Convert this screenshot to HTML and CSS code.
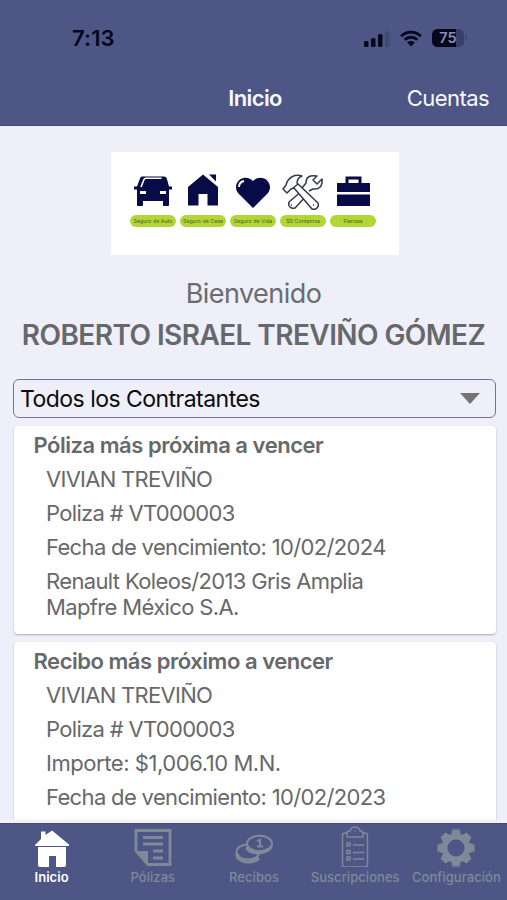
FILE: index.html
```html
<!DOCTYPE html>
<html lang="es">
<head>
<meta charset="utf-8">
<meta name="viewport" content="width=device-width, initial-scale=1">
<title>Inicio</title>
<link rel="stylesheet" href="styles.css">
</head>
<body>
<div class="app">
  <header class="header">
    <div class="status">
      <span class="time">7:13</span>
      <div class="status-icons">
        <svg class="signal" width="26" height="17" viewBox="0 0 26 17">
          <rect x="0" y="11" width="4.5" height="6" rx="1.5"/><rect x="7" y="8" width="4.5" height="9" rx="1.5"/><rect x="14" y="4" width="4.5" height="13" rx="1.5"/><rect class="dim" x="21" y="1" width="4.5" height="16" rx="1.5"/>
        </svg>
        <svg class="wifi" width="22" height="17" viewBox="0 0 22 17">
          <path d="M1.2 6.2a14 14 0 0 1 19.6 0M4.7 9.8a9 9 0 0 1 12.6 0" fill="none" stroke="#05071c" stroke-width="2.8"/><path d="M7.2 12.6a5.6 5.6 0 0 1 7.6 0L11 16.5z"/>
        </svg>
        <div class="battery"><span>75</span></div>
      </div>
    </div>
    <nav class="navbar">
      <h1>Inicio</h1>
      <a class="accounts">Cuentas</a>
    </nav>
  </header>

  <main class="content">
    <section class="banner">
      <div class="service">
        <svg width="38" height="34" viewBox="0 0 38 34"><path d="M8 2.500h22q2 0 2.800 2L35 12.500V31q0 1-1 1h-4q-1 0-1-1v-4H9v4q0 1-1 1H4q-1 0-1-1V12.500L6 4.500q.5-2 2-2z"/><path d="M0 14h5M33 14h5" stroke="#080b46" stroke-width="3"/><path d="M7 13l3-7.500q.5-1.300 2-1.300h15.500" fill="none" stroke="#fff" stroke-width="1.600"/><path d="M6 17h6v3H6zM26 17h6v3h-6z" fill="#fff"/></svg>
        <span class="pill">Seguro de Auto</span>
      </div>
      <div class="service">
        <svg width="38" height="34" viewBox="0 0 38 34"><path d="M19 .5 34 13v18.500H23.500V20h-9v11.500H4V13z"/><path d="M25 .5h7v7z"/></svg>
        <span class="pill">Seguro de Casa</span>
      </div>
      <div class="service">
        <svg width="38" height="34" viewBox="0 0 38 34"><path d="M19 34 4 19C-3 9 10-2 19 7c9-9 22 2 15 12z"/><path d="M5 13q0-5 5-6" fill="none" stroke="#fff" stroke-width="2"/></svg>
        <span class="pill">Seguro de Vida</span>
      </div>
      <div class="service">
        <svg class="tools" width="42" height="36" viewBox="0 0 42 36"><path d="m21 16-14 12q-1 3 1 5t5 1l12-13M27 17l4-2q10 1 9-10l-5 5-4-4 4-4q-11-2-11 7l-4 5"/><path d="m9 15-4 4-4-4 3-4c2-8 9-11 16-9q-5 2-5 7l21 20q1 3-1 5t-5 1L12 14z"/><path d="m11 14 5-4M31 31h1M9 31h1"/></svg>
        <span class="pill">SD Contamos</span>
      </div>
      <div class="service">
        <svg width="38" height="34" viewBox="0 0 38 34"><path d="M3 9h33v9H3zM3 20.500h33V32H3z"/><path d="M13 9V4h13v5" fill="none" stroke="#080b46" stroke-width="3"/></svg>
        <span class="pill">Fianzas</span>
      </div>
    </section>

    <section class="welcome">
      <p class="greeting">Bienvenido</p>
      <h2>ROBERTO ISRAEL TREVIÑO GÓMEZ</h2>
    </section>

    <div class="select"><span>Todos los Contratantes</span><svg width="20" height="11" viewBox="0 0 20 11"><path d="M0 0h20L10 11z"/></svg></div>

    <article class="card">
      <h3>Póliza más próxima a vencer</h3>
      <p class="vivian">VIVIAN TREVIÑO</p>
      <p class="number">Poliza # VT000003</p>
      <p class="date">Fecha de vencimiento: 10/02/2024</p>
      <p class="car">Renault Koleos/2013 Gris Amplia<br>Mapfre México S.A.</p>
    </article>
    <article class="card">
      <h3>Recibo más próximo a vencer</h3>
      <p class="vivian">VIVIAN TREVIÑO</p>
      <p class="number">Poliza # VT000003</p>
      <p class="amount">Importe: $1,006.10 M.N.</p>
      <p class="date">Fecha de vencimiento: 10/02/2023</p>
    </article>
  </main>

  <nav class="tabs">
    <a class="tab active">
      <svg width="36" height="44" viewBox="0 0 36 44"><path d="M1 22 7 16V8.500h4.500V12L18 7.500 35 21.500V23H1z"/><path d="M4 24h28v18q0 2-2 2h-8V33h-7v11H6q-2 0-2-2z"/></svg>
      <span>Inicio</span>
    </a>
    <a class="tab">
      <svg width="38" height="44" viewBox="0 0 38 44"><path d="M2 7.500h34v34H14L2 28z" fill="none" stroke="#7f8a98" stroke-width="2.800"/><path d="M2 28h12v14z"/><path d="M9 14.500h20M9 21h20M19 28h10M19 35h10" stroke="#7f8a98" stroke-width="3.200"/></svg>
      <span>Pólizas</span>
    </a>
    <a class="tab">
      <svg class="coins" width="38" height="44" viewBox="0 0 38 44"><ellipse cx="13" cy="29" rx="11.500" ry="7.500"/><path class="rim" d="M2 31c1 8 13 10 22 4"/><path class="rim" d="M12 24c3 8 22 7 24-2"/><ellipse cx="24.500" cy="20.500" rx="12.500" ry="7.700"/><path class="one" d="m22 18 3-1v6M22 23.500h6"/></svg>
      <span>Recibos</span>
    </a>
    <a class="tab">
      <svg class="clipboard" width="28" height="44" viewBox="0 0 28 44"><path d="M6 10H4Q1.500 10 1.500 12.500V42q0 2 2.500 2h20q2.500 0 2.500-2V12.500Q26.500 10 24 10h-2M6 14v-3.500Q6 8 9 8q1-4 5-4t5 4q3 0 3 2.500V14zM14 8h.1M6 20h3v3H6zM6 27.500h3v3H6zM6 34h3v3H6zM12.500 22H23M12.500 29.500H23M12.500 36H23"/></svg>
      <span>Suscripciones</span>
    </a>
    <a class="tab">
      <svg class="gear" width="38" height="44" viewBox="0 0 38 44"><circle cx="19" cy="25" r="11.500" fill="none" stroke="#7f8a98" stroke-width="6"/><path d="M14 12l1.500-5.500h7L24 12zM14 38l1.500 5.500h7L24 38zM6 20l-5.500 1.500v7L6 30zM32 20l5.500 1.500v7L32 30z"/><path transform="rotate(45 19 25)" d="M14 12l1.500-5.500h7L24 12zM14 38l1.500 5.500h7L24 38zM6 20l-5.500 1.500v7L6 30zM32 20l5.500 1.500v7L32 30z"/></svg>
      <span>Configuración</span>
    </a>
  </nav>
</div>
</body>
</html>
```

FILE: styles.css
```css
* { box-sizing: border-box; }
body { margin: 0; font-family: Inter, "Liberation Sans", sans-serif; color: #67686b; background: #eeeff8; }
h1, h2, h3, p { margin: 0; }
svg { display: block; flex: none; }
.app { width: 507px; height: 900px; display: flex; flex-direction: column; overflow: hidden; }

.header { flex: none; height: 126px; background: #4d5685; border-bottom: 1px solid #444b75; }
.status { height: 70px; padding: 6px 43px 0 72px; display: flex; align-items: center; justify-content: space-between; }
.time { font-size: 22px; font-weight: 600; letter-spacing: 0.1px; color: #05071c; }
.status-icons { display: flex; align-items: center; gap: 10px; fill: #05071c; }
.dim { fill: #414a75; }
.battery { position: relative; width: 32px; height: 18px; border-radius: 5.5px; background: linear-gradient(90deg, #05071c 76%, #38406a 76%); color: #8890b4; font-size: 14.5px; font-weight: 600; line-height: 18px; text-align: center; }
.battery::after { content: ""; position: absolute; left: 33px; top: 6px; width: 2px; height: 6px; border-radius: 0 2px 2px 0; background: #414a75; }
.navbar { height: 55px; display: grid; grid-template-columns: 1fr auto 1fr; align-items: center; padding: 0 18px 0 21px; color: #f8f8ff; font-size: 22px; line-height: 26px; }
.navbar h1 { grid-column: 2; font-size: 22px; font-weight: 600; letter-spacing: -0.6px; }
.accounts { justify-self: end; letter-spacing: -0.55px; }

.content { flex: 1; min-height: 0; overflow: hidden; padding: 26px 11px 0 14px; }
.banner { width: 288px; height: 103px; margin-left: 97px; background: #fff; padding: 22px 22px 0 17px; display: grid; grid-template-columns: repeat(5, 50px); align-content: start; fill: #080b46; }
.service { display: flex; flex-direction: column; align-items: center; }
.service svg { height: 34px; }
.service .tools { height: 36px; margin-bottom: -2px; fill: #fff; stroke: #34384d; stroke-width: 1.5; stroke-linejoin: round; }
.pill { width: 45.5px; height: 12px; margin-top: 7px; border-radius: 6px; background: #b2d635; color: #4c6329; font-size: 5.3px; line-height: 12px; text-align: center; white-space: nowrap; }

.welcome { text-align: center; margin: 22px -11px 0 -14px; white-space: nowrap; }
.greeting { font-size: 27px; line-height: 34px; letter-spacing: -0.55px; color: #6b6c70; }
.welcome h2 { font-size: 28px; line-height: 34px; margin-top: 7px; font-weight: 600; letter-spacing: -0.57px; }

.select { height: 39px; margin: 27px 0 0 -1px; border: 1.5px solid #70739d; border-radius: 6px; padding: 0 15px 0 6px; display: flex; align-items: center; justify-content: space-between; color: #0b0b10; font-size: 23px; letter-spacing: -0.53px; }
.select svg { fill: #747477; }

.card { height: 208px; margin-top: 8px; padding: 6px 19.5px; background: #fff; border-radius: 4px; box-shadow: 0 1px 2px #a9abb9; font-size: 22px; line-height: 26px; white-space: nowrap; }
.card h3 { font-size: 22px; line-height: 26px; font-weight: 600; letter-spacing: -0.47px; }
.card p { margin: 8px 0 0 12.5px; }
.vivian { letter-spacing: -0.72px; }
.number { letter-spacing: -0.68px; }
.date { letter-spacing: -0.66px; }
.car { letter-spacing: -0.64px; }
.amount { letter-spacing: -0.44px; }

.tabs { flex: none; height: 77px; padding-left: 1px; background: #4d5685; border-top: 1px solid #444b75; box-shadow: 0 -3px 0 #f0f1fa; position: relative; display: grid; grid-template-columns: repeat(5, 1fr); }
.tab { display: flex; flex-direction: column; align-items: center; color: #7f8a98; fill: #7f8a98; font-size: 13px; font-weight: 500; line-height: 16px; white-space: nowrap; }
.tab svg { margin-top: -1px; }
.tab span { margin-top: 2px; letter-spacing: 0.05px; }
.active { color: #fff; fill: #fff; }
.active span { font-weight: 600; }
.coins { fill: #4d5685; stroke: #7f8a98; stroke-width: 2; }
.coins .one { fill: none; }
.coins .rim { fill: none; stroke-width: 4; }
.clipboard { fill: none; stroke: #7f8a98; stroke-width: 1.5; stroke-linecap: round; stroke-linejoin: round; }
```
